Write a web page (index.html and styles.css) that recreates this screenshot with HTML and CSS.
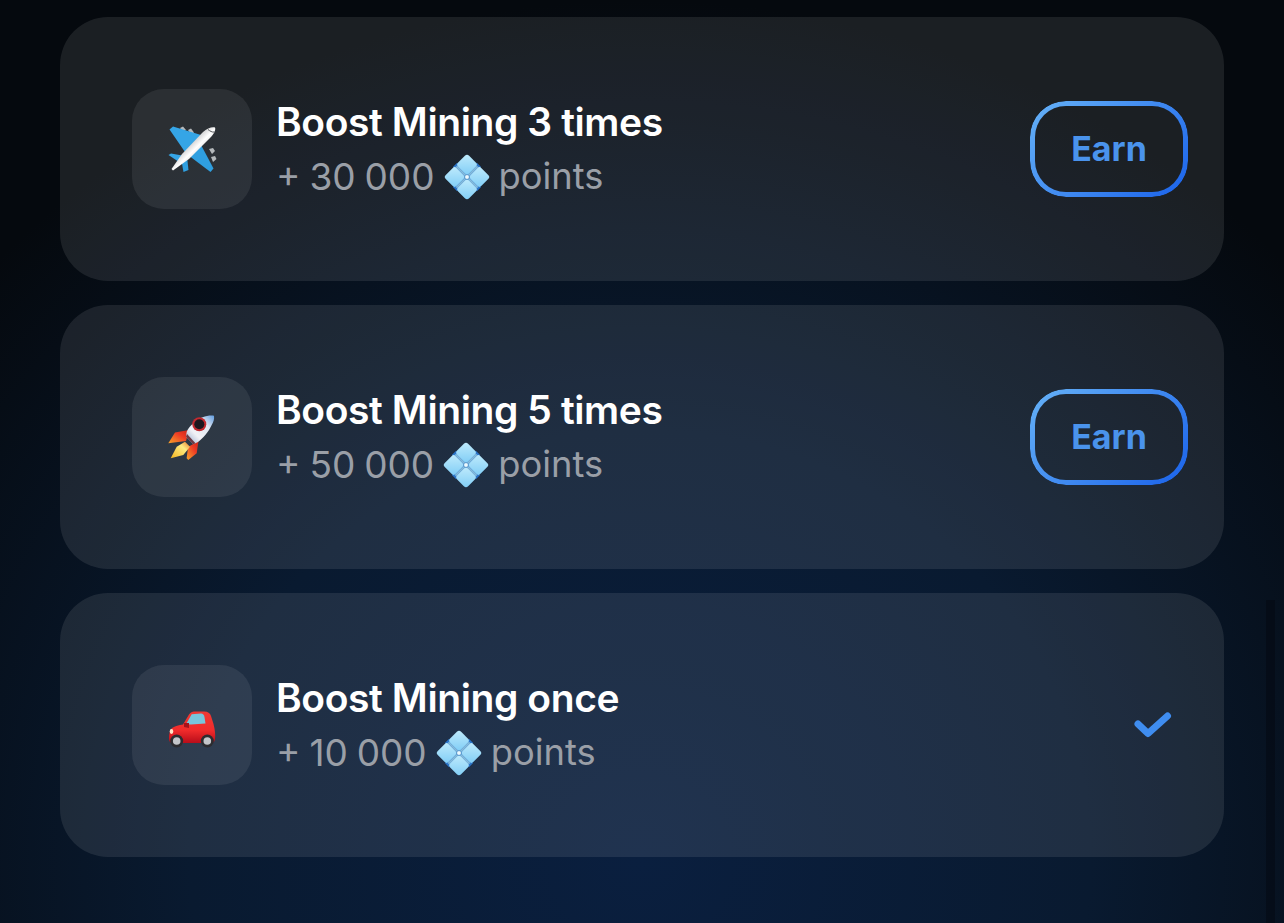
FILE: index.html
```html
<!DOCTYPE html>
<html lang="en">
<head>
    <meta charset="UTF-8">
    <meta name="viewport" content="width=device-width, initial-scale=1.0">
    <title>Boost Mining</title>
    <link rel="stylesheet" href="styles.css">
</head>
<body>
    <svg class="defs" width="0" height="0" aria-hidden="true">
        <defs>
            <linearGradient id="petal" x1="0" y1="0" x2="1" y2="1">
                <stop offset="0" stop-color="#c0ebfc"/>
                <stop offset="1" stop-color="#7fcdf6"/>
            </linearGradient>
            <symbol id="gem" viewBox="0 0 46 46">
                <g transform="rotate(45 23 23)">
                    <rect x="20" y="6" width="6" height="34" fill="#2b74c8"/>
                    <rect x="6" y="20" width="34" height="6" fill="#2b74c8"/>
                    <rect x="6.500" y="6.500" width="15.500" height="15.500" rx="3" fill="url(#petal)"/>
                    <rect x="24" y="6.500" width="15.500" height="15.500" rx="3" fill="url(#petal)"/>
                    <rect x="6.500" y="24" width="15.500" height="15.500" rx="3" fill="url(#petal)"/>
                    <rect x="24" y="24" width="15.500" height="15.500" rx="3" fill="url(#petal)"/>
                    <rect x="22" y="8" width="2" height="30" fill="#86bcdc"/>
                    <rect x="8" y="22" width="30" height="2" fill="#86bcdc"/>
                </g>
                <circle cx="23" cy="23" r="2.400" fill="#eef9fe" stroke="#4a90c8" stroke-width="0.800"/>
            </symbol>
        </defs>
    </svg>

    <div class="task-list">
        <div class="task-card">
            <div class="task-icon">
                <svg width="50" height="50" viewBox="-1 -1 50 50">
                    <defs>
                        <linearGradient id="hull" x1="0" y1="0" x2="1" y2="1">
                            <stop offset="0.2" stop-color="#7f7f83"/>
                            <stop offset="0.52" stop-color="#ffffff"/>
                            <stop offset="0.8" stop-color="#a2a2a5"/>
                        </linearGradient>
                    </defs>
                    <path d="M12 3 L15 1.500 L18 5 L15 7Z M20 5 L23 3.500 L26 7.500 L23 9.500Z M41 24 L45 23 L47 26 L44 29Z M43 32 L47 31 L48.500 34 L45 37Z" fill="#b4b8bb"/>
                    <path d="M1.500 4.500 L5 1.500 L33 10 L17 27Z" fill="#35a5e6"/>
                    <path d="M32 18 L45.500 43.500 L42.500 47 L20 30Z" fill="#2f9fe0"/>
                    <path d="M0.500 30 L3 28.500 L17 31 L11 37Z" fill="#35a5e6"/>
                    <path d="M13.500 36 L19 31.500 L20.500 45 L15.500 47Z" fill="#2f9fe0"/>
                    <path d="M47 2.500 C48 5 46 9 42 13 L21 34 L5 45.500 L3.500 44 L14 29 L35 7 C39 3.500 44 1.500 47 2.500Z" fill="url(#hull)"/>
                    <path d="M40 4.500 C42 6 44 7.500 46.500 7" stroke="#4d5054" stroke-width="1" fill="none"/>
                </svg>
            </div>
            <div class="task-info">
                <div class="task-title">Boost Mining 3 times</div>
                <div class="task-reward">
                    <span class="reward-amount">+ 30 000</span>
                    <svg class="gem" width="46" height="46"><use href="#gem"/></svg>
                    <span class="reward-unit">points</span>
                </div>
            </div>
            <button class="earn-btn">Earn</button>
        </div>

        <div class="task-card">
            <div class="task-icon">
                <svg width="50" height="50" viewBox="0 -2 50 50">
                    <defs>
                        <linearGradient id="rocket-body" x1="0" y1="1" x2="1" y2="0">
                            <stop offset="0" stop-color="#8fa6c8"/>
                            <stop offset="0.35" stop-color="#f2f2f6"/>
                            <stop offset="0.7" stop-color="#dfe6f0"/>
                            <stop offset="1" stop-color="#5f9ce0"/>
                        </linearGradient>
                        <linearGradient id="flame" x1="0" y1="1" x2="1" y2="0">
                            <stop offset="0" stop-color="#f6b61e"/>
                            <stop offset="0.65" stop-color="#fdeb82"/>
                            <stop offset="1" stop-color="#e8762a"/>
                        </linearGradient>
                        <linearGradient id="fin" x1="0" y1="1" x2="1" y2="0">
                            <stop offset="0" stop-color="#f8a52a"/>
                            <stop offset="0.6" stop-color="#ee3a24"/>
                            <stop offset="1" stop-color="#c92418"/>
                        </linearGradient>
                    </defs>
                    <path d="M1.300 29.300 L8 18.500 L22 16 L19 27Z" fill="url(#fin)"/>
                    <path d="M19.700 44.300 L21 33 L31.500 27 L29.700 39.300 L21.300 46Z" fill="url(#fin)"/>
                    <path d="M3.700 44.300 L9.700 32.700 L18 27.700 L23 32.700 L16.300 41Z" fill="url(#flame)"/>
                    <path d="M47 1.700 C40 1 33 3.500 28 7.700 C24 11 21 14.500 19.700 17.700 L19 22.700 L26.300 30.300 L31 28 C36 24 41 19 44.700 11 C46.500 8 47.500 5 47 1.700Z" fill="url(#rocket-body)"/>
                    <circle cx="32.300" cy="10.300" r="7" fill="#c22a30"/>
                    <circle cx="32.300" cy="10.300" r="5" fill="#1d171e"/>
                    <path d="M19 22.700 L26.300 30.300 L28.500 29.200 L20 20Z" fill="#6d3a44"/>
                </svg>
            </div>
            <div class="task-info">
                <div class="task-title">Boost Mining 5 times</div>
                <div class="task-reward">
                    <span class="reward-amount">+ 50 000</span>
                    <svg class="gem" width="46" height="46"><use href="#gem"/></svg>
                    <span class="reward-unit">points</span>
                </div>
            </div>
            <button class="earn-btn">Earn</button>
        </div>

        <div class="task-card">
            <div class="task-icon">
                <svg width="50" height="50" viewBox="0 -11 50 50">
                    <defs>
                        <linearGradient id="car-body" x1="0" y1="0" x2="0" y2="1">
                            <stop offset="0" stop-color="#ef3a34"/>
                            <stop offset="0.6" stop-color="#f02b2b"/>
                            <stop offset="1" stop-color="#b80d1a"/>
                        </linearGradient>
                    </defs>
                    <path d="M2 27 C2 23 3 19 5 17 C8 15 12 14 16 13.500 L22 3.500 C23.500 1 26 0.500 29 0.500 L37 0.500 C41 0.500 43 2 44 5 L46.500 13 C48 19 48.500 24 48 28 C47.500 31 46 32 44 32 L6 32 C3 32 2 30 2 27Z" fill="url(#car-body)"/>
                    <path d="M19 13.300 L24.700 3.300 L34 2.500 C36 2.500 37 4 37.500 6 L38.500 12.500 L24 13.500Z" fill="#78c6dc"/>
                    <path d="M17 12 L22 12 L22 17 L17 16Z" fill="#a5121c"/>
                    <circle cx="9.700" cy="30" r="6.500" fill="#2c2c30"/>
                    <circle cx="9.700" cy="30" r="3.800" fill="#c4c6ca"/>
                    <circle cx="40.300" cy="30" r="6.500" fill="#2c2c30"/>
                    <circle cx="40.300" cy="30" r="3.800" fill="#c4c6ca"/>
                    <ellipse cx="4.500" cy="20.500" rx="1.800" ry="2.400" fill="#ffe6c8"/>
                </svg>
            </div>
            <div class="task-info">
                <div class="task-title">Boost Mining once</div>
                <div class="task-reward">
                    <span class="reward-amount">+ 10 000</span>
                    <svg class="gem" width="46" height="46"><use href="#gem"/></svg>
                    <span class="reward-unit">points</span>
                </div>
            </div>
            <svg class="done-check" width="38" height="28" viewBox="0 0 38 28">
                <path d="M4 13 L14 22.500 L33.500 5" fill="none" stroke="#3f8df0" stroke-width="7" stroke-linecap="round" stroke-linejoin="round"/>
            </svg>
        </div>
    </div>

    <div class="edge-strip"></div>
</body>
</html>
```

FILE: styles.css
```css
* {
    margin: 0;
    padding: 0;
    box-sizing: border-box;
}

html, body {
    height: 100%;
    overflow: hidden;
}

body {
    font-family: Inter, "Liberation Sans", sans-serif;
    background:
        radial-gradient(ellipse 900px 860px at 640px 860px, #0a1f3f 0%, #091a30 50%, rgba(6, 15, 26, 0) 100%),
        #05090e;
    position: relative;
}

.defs {
    position: absolute;
}

.task-list {
    display: flex;
    flex-direction: column;
    gap: 24px;
    padding: 17px 60px 0;
}

.task-card {
    height: 264px;
    display: flex;
    align-items: center;
    padding: 0 36px 0 72px;
    background: rgba(255, 255, 255, 0.09);
    border-radius: 48px;
}

.task-icon {
    width: 120px;
    height: 120px;
    flex-shrink: 0;
    display: flex;
    align-items: center;
    justify-content: center;
    background: rgba(255, 255, 255, 0.075);
    border-radius: 32px;
    margin-right: 24px;
}

.task-info {
    flex: 1;
    min-width: 0;
}

.task-title {
    color: #fff;
    font-size: 39px;
    font-weight: 600;
    line-height: 55px;
    letter-spacing: -0.4px;
}

.task-reward {
    display: flex;
    align-items: center;
    gap: 9px;
    color: #9a9fa7;
    font-size: 37px;
    line-height: 55px;
}

.reward-amount {
    word-spacing: -1.5px;
}

.reward-unit {
    font-size: 36.3px;
}

.earn-btn {
    position: relative;
    width: 158px;
    height: 96px;
    border: none;
    border-radius: 36px;
    background: none;
    color: #4a93ec;
    font-family: inherit;
    font-size: 34px;
    font-weight: 700;
    padding-bottom: 2px;
    cursor: pointer;
}

/* gradient ring, inside stays see-through */
.earn-btn::before {
    content: "";
    position: absolute;
    inset: 0;
    padding: 5px;
    border-radius: inherit;
    background: linear-gradient(135deg, #66b2f7 0%, #1a62ea 100%);
    -webkit-mask: linear-gradient(#fff, #fff) content-box, linear-gradient(#fff, #fff);
    -webkit-mask-composite: xor;
    mask-composite: exclude;
}

.done-check {
    margin-right: 16px;
}

.edge-strip {
    position: absolute;
    top: 600px;
    bottom: 0;
    left: 1266px;
    width: 9px;
    background: rgba(2, 6, 12, 0.4);
}
```
